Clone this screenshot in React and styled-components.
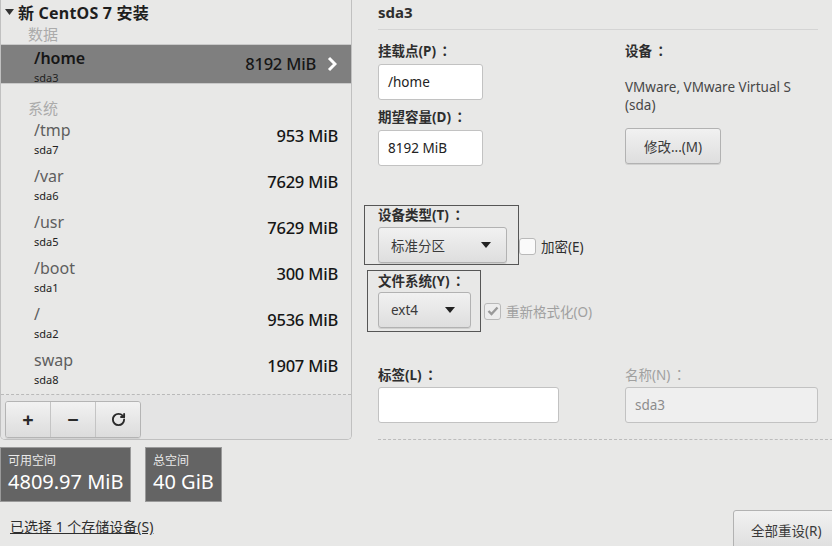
import React from 'react'
import styled, { createGlobalStyle } from 'styled-components'
import { RotateCw } from 'lucide-react'

const Global = createGlobalStyle`
  html, body { margin: 0; padding: 0; background: #e8e8e7; }
  body {
    font-family: "Noto Sans", "Noto Sans CJK SC", sans-serif;
    color: #2e3436;
    width: 832px;
    height: 546px;
    overflow: hidden;
  }
`

const Page = styled.div`
  display: flex;
  width: 832px;
  height: 546px;
  overflow: hidden;
`

const LeftCol = styled.div`
  width: 352px;
  display: flex;
  flex-direction: column;
  flex-shrink: 0;
`

const Panel = styled.div`
  height: 440px;
  box-sizing: border-box;
  border: 1px solid #c0c0c0;
  border-top: none;
  border-radius: 0 0 5px 5px;
  display: flex;
  flex-direction: column;
  overflow: hidden;
`

const List = styled.div`
  flex: 1;
  border-bottom: 1px dashed #b9b9b9;
`

const TreeHead = styled.div`
  display: flex;
  align-items: center;
  gap: 4px;
  height: 24px;
  padding-left: 4px;
  font-size: 16px;
  font-weight: 700;
  letter-spacing: 0.2px;
  color: #1e1e1e;
`

const GroupLabel = styled.div`
  height: ${p => p.$h}px;
  padding-left: 27px;
  box-sizing: border-box;
  display: flex;
  align-items: flex-end;
  font-size: 15px;
  color: #ababab;
  line-height: 20px;
`

const Row = styled.div`
  display: flex;
  align-items: flex-start;
  height: ${p => (p.$sel ? 40 : 46)}px;
  box-sizing: border-box;
  padding: ${p => (p.$sel ? '3px 14px 0 33px' : '2px 13px 0 33px')};
  background: ${p => (p.$sel ? '#7f7f7f' : 'transparent')};
  border-top: ${p => (p.$sel ? '1px solid #c9c9c9' : 'none')};
  border-bottom: ${p => (p.$sel ? '1px solid #c9c9c9' : 'none')};
`

const RowNames = styled.div`
  flex: 1;
  display: flex;
  flex-direction: column;
`

const MountName = styled.div`
  font-size: 16px;
  line-height: 20px;
  font-weight: ${p => (p.$sel ? 600 : 400)};
  color: ${p => (p.$sel ? '#161616' : '#5e5e5e')};
`

const DevName = styled.div`
  font-size: 11px;
  line-height: 16px;
  margin-top: 2px;
  color: #222;
`

const SizeText = styled.div`
  font-size: 16.5px;
  font-weight: 500;
  line-height: 20px;
  margin-top: 6px;
  color: #161616;
  letter-spacing: -0.2px;
`

const Chevron = styled.svg`
  margin: 8px 0 0 11px;
`

const Toolbar = styled.div`
  height: 47px;
  padding: 6px 0 0 4px;
  box-sizing: border-box;
  background: #e4e4e4;
  display: flex;
`

const ToolGroup = styled.div`
  display: flex;
  height: 37px;
  border: 1px solid #b4b4b4;
  border-radius: 3px;
  box-sizing: border-box;
  overflow: hidden;
  box-shadow: 0 1px 0 rgba(0, 0, 0, 0.08);
`

const ToolBtn = styled.div`
  width: 44px;
  display: flex;
  align-items: center;
  justify-content: center;
  background: linear-gradient(#f2f2f2, #dcdcdc);
  border-left: ${p => (p.$first ? 'none' : '1px solid #c4c4c4')};
  font-size: 20px;
  color: #2a2a2a;
  font-weight: 700;
`

const Stats = styled.div`
  display: flex;
  gap: 14px;
  margin-top: 7px;
`

const StatBox = styled.div`
  height: 55px;
  box-sizing: border-box;
  background: #646464;
  border: 1px solid #9a9a9a;
  color: #fff;
  padding: 4px 6px 0 7px;
  display: flex;
  flex-direction: column;
`

const StatLabel = styled.div`
  font-size: 12px;
  line-height: 17px;
  height: 17px;
  color: #e9e9e9;
`

const StatValue = styled.div`
  font-size: 20px;
  line-height: 26px;
  height: 26px;
`

const DevLink = styled.div`
  margin: 16px 0 0 10px;
  font-size: 14px;
  line-height: 18px;
  color: #2e2e2e;
  text-decoration: underline;
`

const RightCol = styled.div`
  flex: 1;
  display: flex;
  flex-direction: column;
  padding: 0 15px 0 26px;
`

const Title = styled.div`
  font-size: 15px;
  font-weight: 700;
  line-height: 24px;
  color: #2e2e2e;
`

const Rule = styled.div`
  height: 1px;
  background: #d4d4d4;
  margin-top: 5px;
`

const FormGrid = styled.div`
  display: grid;
  grid-template-columns: 247px 1fr;
  margin-top: ${p => p.$mt}px;
`

const Field = styled.div`
  display: flex;
  flex-direction: column;
`

const Label = styled.div`
  font-size: 13.5px;
  line-height: 18px;
  height: 18px;
  white-space: nowrap;
  color: ${p => (p.$dim ? '#a0a0a0' : '#2e2e2e')};
  margin-top: ${p => p.$mt || 0}px;
  font-weight: ${p => (p.$dim ? 400 : 700)};
`

const Colon = styled.span`
  font-family: "Noto Sans CJK TC", sans-serif;
  margin-left: 2px;
  line-height: 1;
`

const TextBox = styled.div`
  width: ${p => p.$w}px;
  height: 36px;
  box-sizing: border-box;
  margin-top: ${p => p.$mt || 4}px;
  background: ${p => (p.$off ? '#efefef' : '#fff')};
  border: 1px solid #c2c2c2;
  border-radius: 3px;
  padding: 0 9px;
  display: flex;
  align-items: center;
  font-size: 13.5px;
  color: ${p => (p.$off ? '#8c8c8c' : '#222')};
`

const Info = styled.div`
  margin-top: 18px;
  font-size: 13.5px;
  line-height: 18px;
  color: #474747;
`

const Button = styled.div`
  width: ${p => p.$w}px;
  height: ${p => p.$h || 36}px;
  box-sizing: border-box;
  margin-top: ${p => p.$mt || 0}px;
  border: 1px solid #b2b2b2;
  border-radius: 3px;
  background: linear-gradient(#f1f1f1, #dedede);
  box-shadow: 0 1px 0 rgba(0, 0, 0, 0.1);
  display: flex;
  align-items: center;
  padding-left: ${p => p.$pl || 0}px;
  justify-content: ${p => (p.$pl ? 'flex-start' : 'center')};
  font-size: 13.5px;
  color: #3a3a3a;
`

const OptRow = styled.div`
  display: flex;
  align-items: flex-end;
  margin-top: ${p => p.$mt}px;
  margin-left: ${p => -p.$ml}px;
`

const OutlineBox = styled.div`
  border: 1px solid #565656;
  padding: ${p => p.$pad};
  display: flex;
  flex-direction: column;
`

const Combo = styled(Button)`
  justify-content: space-between;
  padding: 0 15px 0 12px;
  margin-top: ${p => p.$mt}px;
`

const Check = styled.div`
  display: flex;
  align-items: center;
  gap: 5px;
  margin: 0 0 ${p => p.$mb}px ${p => p.$ml}px;
  font-size: 13.5px;
  color: ${p => (p.$dim ? '#a0a0a0' : '#2e2e2e')};
`

const CheckSq = styled.div`
  width: 15px;
  height: 15px;
  border: 1px solid #b9b9b9;
  border-radius: 3px;
  background: ${p => (p.$dim ? '#ededed' : '#fafafa')};
  display: flex;
  align-items: center;
  justify-content: center;
`

const Dashed = styled.div`
  margin: 16px -15px 0 0;
  border-top: 1px dashed #bcbcbc;
`

const Footer = styled.div`
  margin-top: auto;
  display: flex;
  justify-content: flex-end;
  margin-right: -19px;
  margin-bottom: -4px;
`

const Caret = () => (
  <svg width="10" height="6" viewBox="0 0 10 6">
    <path d="M0 0 L10 0 L5 6 Z" fill="#222" />
  </svg>
)

const parts = [
  ['/tmp', 'sda7', '953 MiB'],
  ['/var', 'sda6', '7629 MiB'],
  ['/usr', 'sda5', '7629 MiB'],
  ['/boot', 'sda1', '300 MiB'],
  ['/', 'sda2', '9536 MiB'],
  ['swap', 'sda8', '1907 MiB'],
]

export default function App() {
  return (
    <Page>
      <Global />
      <LeftCol>
        <Panel>
          <List>
            <TreeHead>
              <svg width="9" height="6" viewBox="0 0 9 6">
                <path d="M0 0 L9 0 L4.5 6 Z" fill="#333" />
              </svg>
              新 CentOS 7 安装
            </TreeHead>
            <GroupLabel $h={20}>数据</GroupLabel>
            <Row $sel>
              <RowNames>
                <MountName $sel>/home</MountName>
                <DevName>sda3</DevName>
              </RowNames>
              <SizeText>8192 MiB</SizeText>
              <Chevron width="10" height="16" viewBox="0 0 10 16">
                <path d="M2 2 L8 8 L2 14" stroke="#fff" strokeWidth="3" fill="none" />
              </Chevron>
            </Row>
            <GroupLabel $h={34}>系统</GroupLabel>
            {parts.map(([m, d, s]) => (
              <Row key={d}>
                <RowNames>
                  <MountName>{m}</MountName>
                  <DevName>{d}</DevName>
                </RowNames>
                <SizeText>{s}</SizeText>
              </Row>
            ))}
          </List>
          <Toolbar>
            <ToolGroup>
              <ToolBtn $first>+</ToolBtn>
              <ToolBtn>−</ToolBtn>
              <ToolBtn>
                <RotateCw size={15} strokeWidth={3} color="#2a2a2a" />
              </ToolBtn>
            </ToolGroup>
          </Toolbar>
        </Panel>
        <Stats>
          <StatBox style={{ width: 131 }}>
            <StatLabel>可用空间</StatLabel>
            <StatValue>4809.97 MiB</StatValue>
          </StatBox>
          <StatBox style={{ width: 77 }}>
            <StatLabel>总空间</StatLabel>
            <StatValue>40 GiB</StatValue>
          </StatBox>
        </Stats>
        <DevLink>已选择 1 个存储设备(S)</DevLink>
      </LeftCol>

      <RightCol>
        <Title>sda3</Title>
        <Rule />
        <FormGrid $mt={12}>
          <Field>
            <Label>挂载点(P)<Colon>：</Colon></Label>
            <TextBox $w={105}>/home</TextBox>
            <Label $mt={8}>期望容量(D)<Colon>：</Colon></Label>
            <TextBox $w={105}>8192 MiB</TextBox>
          </Field>
          <Field>
            <Label>设备<Colon>：</Colon></Label>
            <Info>
              VMware, VMware Virtual S
              <br />
              (sda)
            </Info>
            <Button $w={96} $mt={14}>修改...(M)</Button>
          </Field>
        </FormGrid>

        <OptRow $mt={39} $ml={14}>
          <OutlineBox $pad="0 11px 1px 13px">
            <Label>设备类型(T)<Colon>：</Colon></Label>
            <Combo $w={129} $mt={3}>
              标准分区
              <Caret />
            </Combo>
          </OutlineBox>
          <Check $mb={9} $ml={0}>
            <CheckSq />
            加密(E)
          </Check>
        </OptRow>

        <OptRow $mt={5} $ml={11}>
          <OutlineBox $pad="1px 9px 3px 10px">
            <Label>文件系统(Y)<Colon>：</Colon></Label>
            <Combo $w={93} $mt={2}>
              ext4
              <Caret />
            </Combo>
          </OutlineBox>
          <Check $mb={11} $ml={3} $dim>
            <CheckSq $dim>
              <svg width="12" height="10" viewBox="0 0 12 10">
                <path d="M1.5 5 L4.5 8 L10.5 1.5" stroke="#9a9a9a" strokeWidth="2.4" fill="none" />
              </svg>
            </CheckSq>
            重新格式化(O)
          </Check>
        </OptRow>

        <FormGrid $mt={34}>
          <Field>
            <Label>标签(L)<Colon>：</Colon></Label>
            <TextBox $w={181} $mt={3} />
          </Field>
          <Field>
            <Label $dim>名称(N)<Colon>：</Colon></Label>
            <TextBox $w={193} $mt={3} $off>sda3</TextBox>
          </Field>
        </FormGrid>
        <Dashed />

        <Footer>
          <Button $w={104} $h={40} $pl={17}>全部重设(R)</Button>
        </Footer>
      </RightCol>
    </Page>
  )
}
